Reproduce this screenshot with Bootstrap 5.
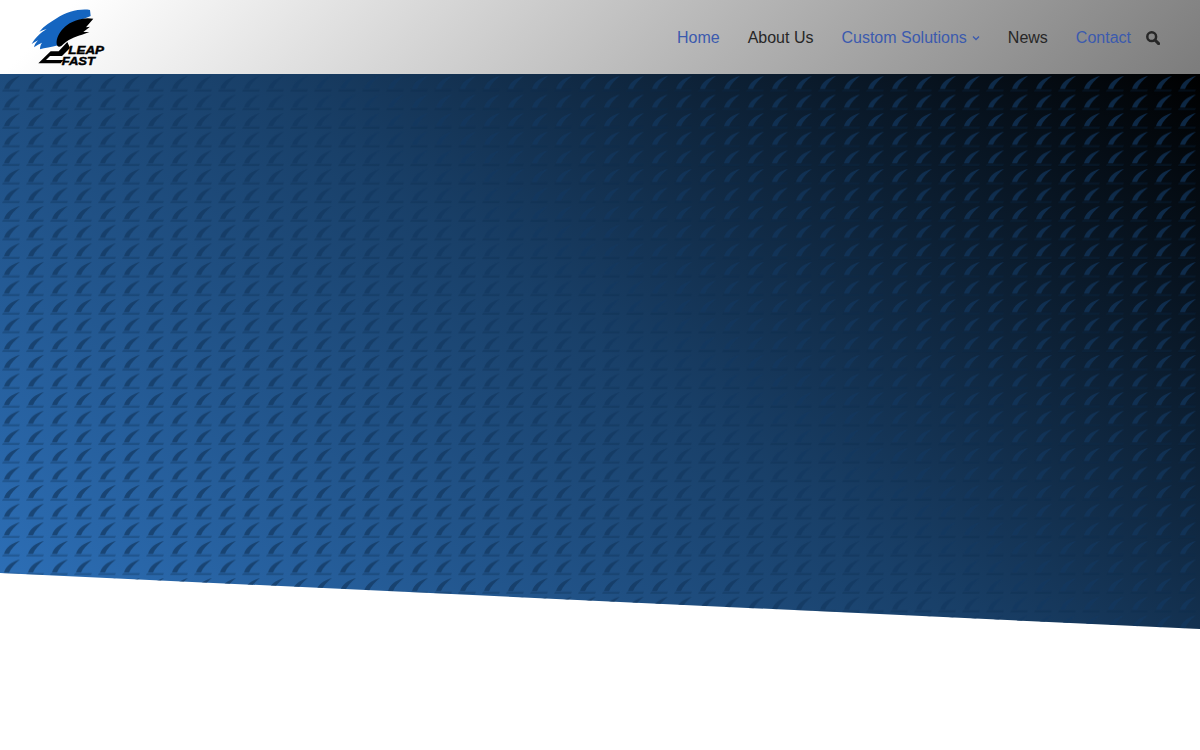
<!DOCTYPE html>
<html lang="en">
<head>
    <meta charset="UTF-8">
    <meta name="viewport" content="width=device-width, initial-scale=1.0">
    <title>Leap Fast</title>
    <link href="https://cdn.jsdelivr.net/npm/bootstrap@5.3.3/dist/css/bootstrap.min.css" rel="stylesheet">
    <style>
        body {
            font-family: "Liberation Sans", Arial, sans-serif;
            background: #fff;
            height: 750px;
            overflow: hidden;
        }
        .top-header {
            height: 74px;
            padding: 0 40px 0 28px;
            background: linear-gradient(135deg, #ffffff 6%, #7c7c7c 100%);
        }
        .site-logo { display: block; width: 80px; height: 62px; }
        .logo-text { font-family: "Liberation Sans", Arial, sans-serif; font-weight: 700; font-style: italic; stroke: #000; stroke-width: 1.2; }
        .main-menu { padding-top: 2px; }
        .main-menu a { margin-right: 28px; font-size: 16px; text-decoration: none; color: #272727; line-height: 24px; }
        .main-menu a.menu-on { color: #3b5aae; }
        .main-menu a.menu-last { margin-right: 15px; }
        .menu-caret { margin-left: 5px; vertical-align: 2px; }
        .hero-band {
            height: 555px;
            background: linear-gradient(37deg, #2e72bc 0%, #194069 50%, #000 100%);
            clip-path: polygon(0 0, 100% 0, 100% 100%, 0 499px);
        }
        .hero-band svg { display: block; width: 100%; height: 100%; filter: blur(.6px); }
    </style>
</head>
<body>
    <header class="top-header d-flex align-items-center justify-content-between">
        <a href="#" class="d-block">
            <svg class="site-logo" viewBox="0 0 240 186">
                <path fill="#1565c0" d="M186 12C156 7 116 17 86 37C70 47 48 60 34 77C44 73 50 71 56 69C38 80 20 97 11 114C18 110 24 106 30 103C24 110 20 116 18 124C26 118 34 114 42 110C38 116 36 122 36 130C50 126 70 124 90 118L120 60C145 45 170 38 188 30Z"/>
                <path fill="#000" d="M196 38C166 32 131 44 111 62C94 77 84 97 86 114C88 122 92 124 100 120C120 100 140 92 162 86L184 78H166L186 62L174 64Z"/>
                <path fill="#000" d="M118 108L92 136H68L31 172H98L106 162H54L66 150H102L126 126Z"/>
                <text class="logo-text" x="121" y="143" font-size="30" fill="#000" textLength="107" lengthAdjust="spacingAndGlyphs">LEAP</text>
                <text class="logo-text" x="101" y="178" font-size="30" fill="#000" textLength="100" lengthAdjust="spacingAndGlyphs">FAST</text>
            </svg>
        </a>
        <nav class="main-menu d-flex align-items-center">
            <a href="#" class="menu-on">Home</a>
            <a href="#">About Us</a>
            <a href="#" class="menu-on">Custom Solutions<svg class="menu-caret" width="8" height="6" viewBox="0 0 8 6"><path d="M1 1.5L4 4.5L7 1.5" fill="none" stroke="#3b5aae" stroke-width="1.3"/></svg></a>
            <a href="#">News</a>
            <a href="#" class="menu-on menu-last">Contact</a>
            <svg width="14" height="14" viewBox="0 0 14 14"><circle cx="5.7" cy="5.7" r="4.4" fill="none" stroke="#272727" stroke-width="2.5"/><path d="M9 9L12.6 12.6" stroke="#272727" stroke-width="3" stroke-linecap="round"/></svg>
        </nav>
    </header>
    <section class="hero-band">
        <svg>
            <defs>
                <pattern id="leafTile" width="24" height="18.6" patternUnits="userSpaceOnUse">
                    <path fill="#12375f" fill-opacity=".7" d="M4 15C6 8 12 4 20 2C15 6 11 10 9 15Z"/>
                    <path fill="#0c2a4c" fill-opacity=".28" d="M3 15.5H20L19 17.5H2Z"/>
                </pattern>
            </defs>
            <rect width="100%" height="100%" fill="url(#leafTile)"/>
        </svg>
    </section>
    <script src="https://cdn.jsdelivr.net/npm/bootstrap@5.3.3/dist/js/bootstrap.bundle.min.js"></script>
</body>
</html>
